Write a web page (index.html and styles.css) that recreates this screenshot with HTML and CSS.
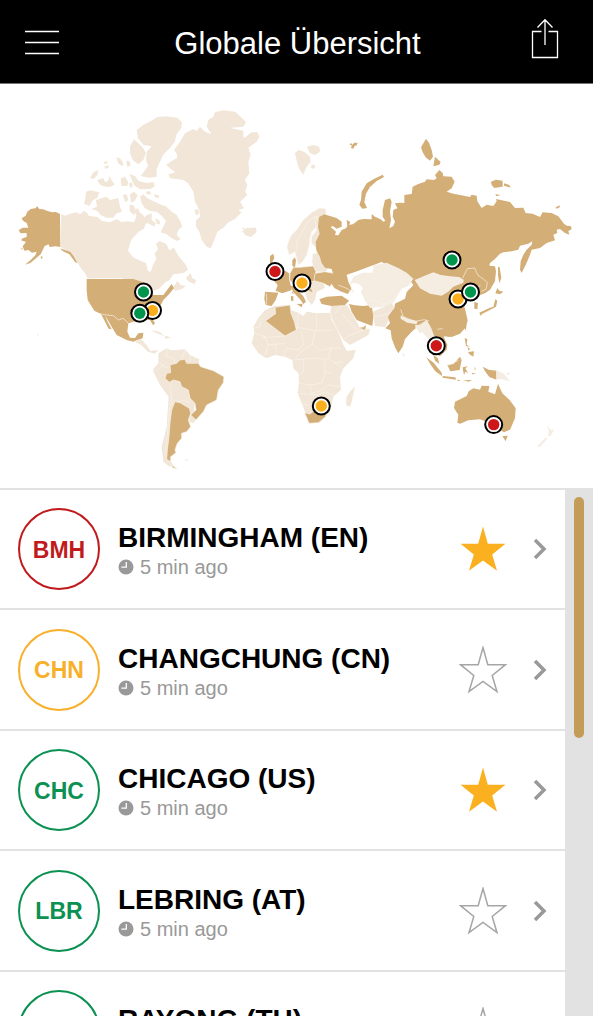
FILE: index.html
```html
<!DOCTYPE html>
<html lang="de">
<head>
<meta charset="utf-8">
<meta name="viewport" content="width=device-width, initial-scale=1">
<title>Globale Übersicht</title>
<link rel="stylesheet" href="styles.css">
</head>
<body>
<svg class="symbols" aria-hidden="true">
  <symbol id="clock" viewBox="0 0 16 16"><circle cx="8" cy="8" r="7.5" fill="#999"/><path d="M8.3 3v5.2H3.4" fill="none" stroke="#fff" stroke-width="1.3"/></symbol>
  <symbol id="star" viewBox="0 0 48 48"><path d="M24 1.500L28.800 18.700H46.500L33.200 29.500L38 45.700L24 35.500L10 45.700L14.800 29.500L1.500 18.700H19.200z"/></symbol>
  <symbol id="chevron" viewBox="0 0 14 22"><path d="M2 2l9 9-9 9" fill="none" stroke="#999" stroke-width="3.500"/></symbol>
</svg>

<header class="topbar">
  <button class="icon-button" type="button" aria-label="Menü">
    <svg width="34" height="42" viewBox="0 0 34 42"><path d="M0 12.500h34M0 23.500h34M0 34.500h34" stroke="#fff" stroke-width="1.700"/></svg>
  </button>
  <h1 class="topbar-title">Globale Übersicht</h1>
  <button class="icon-button" type="button" aria-label="Teilen">
    <svg width="28" height="42" viewBox="0 0 28 42" fill="none" stroke="#fff" stroke-width="1.300"><path d="M10.500 12.500H1.500v26h25v-26h-9M14 26V1M6.500 8.500L14 .700l7.500 7.800"/></svg>
  </button>
</header>

<section class="map" aria-label="Weltkarte">
<svg class="map-drawing" viewBox="0 84 593 404">
  <!-- Canada and Alaska -->
  <g transform="translate(10 95) scale(.33333)">
    <g class="land-pale">
      <path d="M154 357l12 5 14-6 20-4 10 6 12-10 8 4 6 10 26 4 14 12 24 4 20-10 14 9 18-2 20 3 8-20-8-14 12-9 4 12 12 10 10 18-8 22-16 9-22 24-10 32 14 20 20 10 20 8 6 24 8 2 8-22 9-16-5-16 10-14-6-16 10-8 20 8 10 20 14-8 14 26 22 26 6 14-14 10-30 4-12 18-12 6-20 20-30 10-26 2-14-30-40-14H232l-4-12-14-16-24-42-38-24z"/>
      <path d="M488 578l14-20 10 12 16 3-14 10-18 4zM528 550l14-16 4 14 12 8-4 12-20-10z"/>
      <path d="M380 105l20-15 28-15 14-9 28-2 32 4 14 14-2 16-14 20-6 22-15 20-20 20-9 20-10 22v23l-22 3-26-5 14-18 8-13-6-17 2-25 15-16-24-4-17-20z"/>
      <path d="M360 155l12-22 13 12 14 14 9 16-8 20-15 13-17-13-8-20zM358 237l17 6 10 15 25 6 22-2 2 13-14 7-30 1-18-13z"/>
      <path d="M240 248l12-18 13-4-3 14-12 12zM282 202l10-5v8l-9 2zM283 215l12-5 1 8-10 4zM318 187l12 3 10 15-2 9-13-9zM348 197l10 1 4 14-10 3zM262 255l18-6 5 13 10-5 2-14 8 12 9 14-14 7-20-2-12-6zM332 250l13-5 10 17-3 11-18-1zM357 265l9-3 2 13-8 3zM228 290l12-4 28 6-6 16-14 8-10 17-16-7 4-16zM258 315l17-5 15-5 10 10 25-6 5 26 6 15-18 6-8 12h-20l-18-8-10-12-18-6 17-7zM338 300l12-2 5 17-9 7zM360 298l12-8 11 10-8 18-13 4zM358 330l12 1 8 15-6 14-12-10zM408 290l12-1 4 9h-14zM432 297l16 5-3 8-11-4z"/>
      <path d="M390 305l10-7 12 12 18 8 20 10 20 7 15 15 15 10 12 20 4 15-11 10-5 15 12 12-12 6-15-8-15-12-18-6 8-17 8-17-13-16-15-12-20-2-15-8-10-15zM400 372l10-12 15-5v20l12 10-5 10-17-10-13 1zM436 370l12 6 3 13-12-4z"/>
    </g>
    <g class="land">
      <path d="M150 357l-12-6-12 1-16-5-10-4-12-1-6-8-6 6-14 2-10 8-5 12-12 8 5 8 10 6 5 14-17 0-12 8 6 9 18-1v12l-12 4-5 6 15 5-10 13 5 13 12-2 11 8 14-3-4 11-15 15-16 13 16-5 17-14 14-12 12-25 12-5 3 8 17-2 15 2z"/>
      <path d="M150 460l15 5 16 6 10 12 12 22-7-3-18-24-20-10zM92 484l7 2-6 7zM32 460h5v5z"/>
    </g>
  </g>

  <!-- Greenland, Iceland, Svalbard, Nordic countries -->
  <g transform="translate(160 95) scale(.33333)" class="land-pale">
    <path d="M18 210l17-12 17-10-2-13-8-10 18-25 15-25 25-13 10 6 10-13 15 15 20 8-15-23 5-20 15-10 5-13 25-6 35 4 20 18 13 14-8 13-40 3 15 4 25 5v13l2 10 23-18h17l6 13-8 15-25 18 7 22-7 20 3 35-13 20 7 15-7 20 7 10-22 20 12 20-17 5 10 7-20 20-20 10-15 16-18 12-7 20-13 30-12-5-15-20-7-25-10-15v-20l12-10-2-20-13-25-5-30-15-25-15-10-40-5-5-12 20-6z"/>
    <path d="M103 345l12-2 2 14-9 4zM247 402l4-6 4 8 4-6 8 2 5-2h16l2 14-18 14-17-6-2-6-8-4 8-4zM405 175l10-10 17 5 18 15 2 15-12 15-10 24-12-17-6-17zM440 155l20-5 18 5 2 15-15 10-15-5zM455 208l12 4-5 10-9-4z"/>
    <path class="border" d="M381 458l5-20 9-18 15-15 20-30 25-22 25-14 17 3 1 12-9 22-22 22-12 12-5 20-2 20-8 30-12 20-13 10-5-20-5-20-17 10zM464 370l24-6 4 20v26l8 25-10 20-20 5-15-15v-20l15-20zM458 478l22-8 8 15 13 15 4 20-10 12-25-2-10-15-4-15z"/>
    <path class="border-line" d="M408 470l4-35 18-30 15-28 20-12 17 4"/>
  </g>

  <!-- Africa and the Middle East -->
  <g transform="translate(235 230) scale(.33333)">
    <g class="land-pale">
      <path d="M90 240l28-12 47-3 3 15 22 8 15 10 10-13 30 5 40-2 5 22 20 35 15 40 10 17 27-2-7 25-30 30-10 25 3 40-23 20-10 45-15 15-15 18-33 2-10-30-12-30-12-30 4-35-2-25-15-15-3-25-22-10-30-5-25 10-25-15-20-30 8-30-3-20 15-25z"/>
      <path d="M360 470l-10 45-5 15-12-5 2-25 10-15zM288 228l47-4 10 16 20 35 10 20 30 2-5 18-55 30-20-15-30-55-9-25zM413 245l57-25 12 20-17 25-15 26-30-3zM503 368l5 6-4 6z"/>
      <path d="M213 158l27-6 25 8 5 15-25 10-5 25-10 15-15-20-5-25z"/>
    </g>
    <path class="border-line" d="M185 300l5-50M245 250v52h48M245 302l-60-10M150 318l-70 5M80 265l-5 25-20 5M200 305l5 35-15 20-35-5-10 25M240 302l-8 40-30 20-20 20M232 342l22 20 35-8 30 0M289 354l-10 32 20 12 26-2M175 390l30-3 45-2 29 3M205 387v38l-15 10M270 390v40l-10 30-35 5-32-5M225 465l5 25 30-10 20-15 35 5M190 490l60 5-5 35M250 495l20-10 30 12M100 345l-10 30M120 340l5 32M290 430l-20-5M299 398l20 15M60 310l30 10 10 25 50-5M320 225l-20 25M320 250l25 30 25 20M325 330l20-15 55-20M415 260l35-5 25-15M193 520l30 5"/>
    <g class="land">
      <path class="border" d="M120 232l45-7 3 25 10 25 6 25-34 18-30-23-29-22 31-22zM209 548l16 4 15-12 35-8-3 28-22 18-28 2z"/>
      <path d="M253 208l22-8 45-3 22 15-12 13-40 3-30-6zM342 222l18 4 25 2 25-3 5 35-3 28-22-8-25-10-15-25zM373 293l12-1 8-7-3 14z"/>
      <path d="M105 78l10-7 3 14-6 10 18 15 5 18-10 10-20-2 8-20-8-18zM115 150l15-3 20-25 12 8 1 20 4 16 3 14-28 10-20-8 6-17zM90 185l40 3-8 22-12 18-18-3-4-18z"/>
      <path class="border" d="M165 130l10-18h20l40-4 8 17-3 27-25 8-10 8-25-3-16-15z"/>
      <path d="M172 90l8-8 3 10-3 20-8-4zM165 168l16-2 10 18 14 15 8 16-8 7-10-14-17-18zM185 222l18-1-3 11zM168 198l7 1v14l-7-1zM170 187l5-4v10z"/>
      <path class="border" d="M240 130l30-5 25 5 25 15-5 15-25 2-5 8-20-10-28-8zM210 168l20 8 5 14-15-8z"/>
    </g>
    <path class="border-line" d="M95 190v34"/>
    <path d="M267 175l14-6 6 7 12-3-6-6 16-4 8 12 20 13-17 8-30-4-35 7z" fill="#fff"/>
  </g>

  <!-- Russia and China -->
  <g transform="translate(310 120) scale(.33333)">
    <path class="land" d="M43 283l17 5 20 6 15 11v15l-15 6-12-8-6 3 16 14-3 10 10 1 10-16 13-5 4-7-2-18 10 5-2 10 12-3 15-12 15-3 25 1v-16l10 8 17 8 8 7 6-3-8-12v-20l7-30 15-5 5 10-5 30 3 25-5 25 12-7 5-13-7-15 2-20 12-5-7-15 17-2 11 1v-24l22-3 3-22 17-8 20-7 5-7 22 2 8-5-5-10 13-15 10 9 2 10 25 1 9 15-9 20-15 10 20 6 20 4 30 6 5-7 15 3 2 17 13 20 15-10 20 4 10-14-2-7 42 9 15 18 25-1 7 16 21 2 22 10 8-14 27 2 20 10 17 22 8 6 12 1 3 9-10 7 3 10-13-5-15-12-10 2 2 10-12 5 5 17-25 8-20 15-25 5-5 15-8 20-7 15-10 20-5-10 2-25 8-20 10-15 15-15 2-10-12 7-25 6-5 12-20 5-25 3-10 4-15 16-15 12-2 8 17 2 3 15-3 30-15 25-14 10-30 12-15 8-20 12 5 20 7 30-5 20-18 20-25 10-25-2-15-8-25 5v-30l-20-2-30 7-35-17-5-18-20-2 5-33 30-15 5-20 20-20-15-25-80-45-80 30-25 8 5 22 10 20-12 16-22-8-18-10-10-15 8-22-6-20-20-4-10-14-6-20-10-18-2-25 12-25-5-20 3-30z"/>
    <path class="land" d="M148 255l5-15 2-25 15-25 20-12 28-14 4 7-22 12-20 18-12 20-5 25 8 18-14 2zM118 72l6-2 3 4 6-6 10 0-3 8-6 2-4 8-8-2 4-6zM333 82l15-26 9 12 8 22 4 20-9 12-13-10-9-15zM375 110l17 16-4 8-18 5zM543 185l15-6 20 3v18l-25 4-8-9zM582 190l16 5 4 8-20-6zM556 222l15 4-12 3zM736 263l12-7 2 5-9 5zM782 353l8 3z"/>
    <path class="land-faint" d="M130 470l28-12 30 0 2-22 40-8 35 16 25 14 20 18-15 22-20 8-17 28-8 15-22 10-48 5-20-30-35-20-5-22z"/>
    <path class="land-faint" d="M314 480l30-13 26-10 22 8 28 4 27 2 14 8-1 9-30 12-15 15-20 12-35-6-30-16z"/>
    <path class="border-line" d="M458 474l14-28 22-2 10 22 20 14 8 8-4 20-14 6M180 540l25 5 15 10 20-12 16-2M195 560l30 5M500 505l12-10"/>
    <path d="M130 488l18 4 10 12-6 12 10 18-6 20-18-8 2-18-14-22-4-12z" fill="#fff"/>
    <path class="border-line" d="M85 495l30 12 15 18"/>
  </g>

  <!-- South and East Asia, Australia -->
  <g transform="translate(380 260) scale(.33333)">
    <path class="land" d="M40 148l20 4 10 23 35 15 2 15-12 10-20 22-7 23-13 20-10-18-10-27-3-24-16-6 14-15-6-20zM155 208l33 2 4 22 10 22-2 15-20 20-22-14-15-8 8-35z"/>
    <path class="land-faint" d="M62 166l20 10 30 8-2 9-28-5-20-12zM104 196l14-2 22-14 14 25 10 26-14 10-14-14-10-12-6 6zM66 280l8 3-2 8z"/>
    <path class="land" d="M160 285l14 10 4 17-13-10zM139 292l22 16 24 30 1 10-20-14-14-20zM188 348l38 4 2 7-40-6zM202 315l18-3 20-22 5 10-6 30-28 4zM248 322l16-3-8 6 8 14-8-4-4 10-3-14zM232 359l10 1-8 4zM250 361l26-1-10 5zM284 319l3 9-3 3zM308 320l18 9 24 3v27l-22-8-12-16zM275 338l14 3-12 2zM254 234l8 4-2 16 10 6-12-2zM264 276l18-2-2 16-10-6zM262 262l8 4-4 6zM254 200l6-2-4 15zM200 225l9-2-4 9zM283 125l11 5-2 18-9-2zM298 158l30-14 12-4 6-22 6 4-4 18-14 8-28 14-4 6zM346 100l6-16 6 8 12 3-10 8zM354 20l5 2 5 32-6 16-4-24z"/>
    <path class="land" d="M225 425l35-17 6-14 14-9 20 4 5-12 23 1-3 17 20 8 9-32 13 29 22 20 18 25-2 30-15 34-18 8-22-12-16-18-14-2-20-7-35 3-25 10-8-3 3-24-13-20zM367 528l16-1-6 17z"/>
    <path class="land-faint" d="M350 331l22 10 18 23-24-6h-16zM500 495l12 15 10-1-10 20-8-2 2-14zM470 560l28-28 4 4-22 24zM458 415l10 7zM376 340l16-3-8 8zM520 403l8-4zM15 580l7 3z"/>
    <path class="border-line" d="M350 330v30M62 148l8 22 35 14 28-5 14 4M172 208l16-2M205 316l30-15"/>
  </g>

  <!-- The Americas -->
  <g transform="translate(70 270) scale(.33333)">
    <path class="land" d="M50 27h140l25 8 25 15 10 25 30 0 25-33 7 13-17 20-15 15-18 35-14 23 7 12-6 6-9-16-25 0-25 5-15 5-3 25 8 18 15 1 10-14 15-2-2 17-18 6-10 4-20-5-30-15-15-25-20-35 8 20 12 23-9-2-23-44-20-10-20-32-3-30z"/>
    <path class="border-line" d="M85 131l25 4 20 2 15 13 15-5 15 15"/>
    <path class="land-pale" d="M195 215l18-8 18 20 10 16 25-3-12 11-20-6-20-20zM242 180l28 6 14 12-24-8zM285 197l18 5-18 4zM342 569l13-1-5 4zM265 250l25-15 12 6 43-3 15 17 28 13-3 17-55 15 10 45 20 20-2 20 17 15-3 15 8 30-10 15-12-5v-25l-38-30-10 70-10 50-10 40 20 25-12 5-18-15-5-45 15-60 6-90-26-35-22-45 17-20z"/>
    <path class="border-line" d="M292 236l-4 22 25 10 2 15M345 240l-10 28M268 280l24 14M250 302l14-4 18-14M302 345l4 60M362 255v22M318 398l22-8 20 10M300 400l-8 90-6 60"/>
    <path class="land border" d="M330 270l15-2 5 12 35 0 7 10 38 12 32 18-2 18-15 22-5 30-30 15-10 20-22 25-16-15 16-15-3-20-15-15-5-25-20-10-5-15-20-5-12 7-13-12 5-15 12-2-2-23 20-5zM315 395l15 3 28 17 4 15-7 20 7 20-12 15-15 5v15l-13 15-7 20 3 8-16 12v15l-12-7 2-28 5-40 3-40 5-40zM303 583l19 14-14-4z"/>
  </g>
  <path class="land-pale" d="M37 334l2 1-1 1z"/>

  <g class="pins">
    <g class="pin pin-green" transform="translate(452 260)"><circle class="pin-ring" r="8.500"/><circle class="pin-dot" r="5.700"/></g>
    <g class="pin pin-amber" transform="translate(458 299)"><circle class="pin-ring" r="8.500"/><circle class="pin-dot" r="5.700"/></g>
    <g class="pin pin-green" transform="translate(470.500 292)"><circle class="pin-ring" r="8.500"/><circle class="pin-dot" r="5.700"/></g>
    <g class="pin pin-red" transform="translate(275 271.500)"><circle class="pin-ring" r="8.500"/><circle class="pin-dot" r="5.700"/></g>
    <g class="pin pin-amber" transform="translate(302 283)"><circle class="pin-ring" r="8.500"/><circle class="pin-dot" r="5.700"/></g>
    <g class="pin pin-amber" transform="translate(321.300 406)"><circle class="pin-ring" r="8.500"/><circle class="pin-dot" r="5.700"/></g>
    <g class="pin pin-green" transform="translate(143.500 292)"><circle class="pin-ring" r="8.500"/><circle class="pin-dot" r="5.700"/></g>
    <g class="pin pin-amber" transform="translate(152.500 310.500)"><circle class="pin-ring" r="8.500"/><circle class="pin-dot" r="5.700"/></g>
    <g class="pin pin-green" transform="translate(139.800 313.300)"><circle class="pin-ring" r="8.500"/><circle class="pin-dot" r="5.700"/></g>
    <g class="pin pin-red" transform="translate(436.300 345.700)"><circle class="pin-ring" r="8.500"/><circle class="pin-dot" r="5.700"/></g>
    <g class="pin pin-red" transform="translate(493.700 424.600)"><circle class="pin-ring" r="8.500"/><circle class="pin-dot" r="5.700"/></g>
  </g>
</svg>
</section>

<main class="locations">
  <ul class="list">
    <li class="row">
      <span class="badge badge-red">BMH</span>
      <div class="info"><h2 class="name">BIRMINGHAM (EN)</h2><p class="time"><svg class="clock"><use href="#clock"/></svg>5 min ago</p></div>
      <button class="favorite favorite-on" type="button" aria-label="Favorit Birmingham" aria-pressed="true"><svg class="star"><use href="#star"/></svg></button>
      <a class="open" href="#bmh" aria-label="Birmingham öffnen"><svg class="chevron"><use href="#chevron"/></svg></a>
    </li>
    <li class="row">
      <span class="badge badge-amber">CHN</span>
      <div class="info"><h2 class="name">CHANGCHUNG (CN)</h2><p class="time"><svg class="clock"><use href="#clock"/></svg>5 min ago</p></div>
      <button class="favorite" type="button" aria-label="Favorit Changchung" aria-pressed="false"><svg class="star"><use href="#star"/></svg></button>
      <a class="open" href="#chn" aria-label="Changchung öffnen"><svg class="chevron"><use href="#chevron"/></svg></a>
    </li>
    <li class="row">
      <span class="badge badge-green">CHC</span>
      <div class="info"><h2 class="name">CHICAGO (US)</h2><p class="time"><svg class="clock"><use href="#clock"/></svg>5 min ago</p></div>
      <button class="favorite favorite-on" type="button" aria-label="Favorit Chicago" aria-pressed="true"><svg class="star"><use href="#star"/></svg></button>
      <a class="open" href="#chc" aria-label="Chicago öffnen"><svg class="chevron"><use href="#chevron"/></svg></a>
    </li>
    <li class="row">
      <span class="badge badge-green">LBR</span>
      <div class="info"><h2 class="name">LEBRING (AT)</h2><p class="time"><svg class="clock"><use href="#clock"/></svg>5 min ago</p></div>
      <button class="favorite" type="button" aria-label="Favorit Lebring" aria-pressed="false"><svg class="star"><use href="#star"/></svg></button>
      <a class="open" href="#lbr" aria-label="Lebring öffnen"><svg class="chevron"><use href="#chevron"/></svg></a>
    </li>
    <li class="row">
      <span class="badge badge-green"></span>
      <div class="info"><h2 class="name">RAYONG (TH)</h2></div>
      <button class="favorite" type="button" aria-label="Favorit Rayong" aria-pressed="false"><svg class="star"><use href="#star"/></svg></button>
      <a class="open" href="#ryg" aria-label="Rayong öffnen"><svg class="chevron"><use href="#chevron"/></svg></a>
    </li>
  </ul>
  <div class="scroll-track"><div class="scroll-thumb"></div></div>
</main>
</body>
</html>
```

FILE: styles.css
```css
* { box-sizing: border-box; }

body {
  margin: 0;
  height: 100vh;
  display: flex;
  flex-direction: column;
  overflow: hidden;
  background: #fff;
  color: #000;
  font-family: "Liberation Sans", Arial, sans-serif;
}

h1, h2, p, ul { margin: 0; padding: 0; }

button { border: 0; padding: 0; background: none; cursor: pointer; }

svg { display: block; }

.symbols { display: none; }

.topbar {
  flex: none;
  height: 84px;
  padding: 0 32px 4px 24px;
  display: grid;
  grid-template-columns: 36px 1fr 32px;
  align-items: center;
  background: #000;
  border-bottom: 1px solid #777;
  color: #fff;
}

.icon-button { display: flex; justify-content: center; }

.topbar-title {
  padding: 8px 0 0 6px;
  text-align: center;
  font-size: 31px;
  line-height: 36px;
  font-weight: 400;
}

.map { flex: none; }
.map-drawing { width: 100%; height: auto; }

.land { fill: #d3ae76; }
.land-pale { fill: #f1e6d7; }
.land-faint { fill: #f5ede2; }
.border { stroke: #faf4eb; stroke-width: 2; }
.border-line { fill: none; stroke: #faf4eb; stroke-width: 2; }

.pin-ring { fill: #fff; stroke: #000; stroke-width: 2px; }
.pin-green .pin-dot { fill: #00954d; }
.pin-amber .pin-dot { fill: #faaf1e; }
.pin-red .pin-dot { fill: #cd1719; }

.locations {
  flex: 1;
  min-height: 0;
  display: flex;
  overflow: hidden;
  border-top: 2px solid #e2e2e2;
}

.list { flex: 1; list-style: none; }

.row {
  height: 120px;
  padding: 0 18px;
  display: flex;
  align-items: center;
  border-bottom: 2px solid #e2e2e2;
}

.row:nth-child(even) { height: 121px; }

.badge {
  flex: none;
  width: 82px;
  height: 82px;
  margin-right: 18px;
  padding-top: 2px;
  display: flex;
  align-items: center;
  justify-content: center;
  border: 2px solid;
  border-radius: 50%;
  font-size: 23px;
  font-weight: 700;
}

.badge-red { color: #c01a1c; }
.badge-amber { color: #f8af2a; }
.badge-green { color: #0b9152; }

.info { flex: 1; height: 64px; padding-top: 4px; }

.name { font-size: 28px; line-height: 34px; font-weight: 700; }

.time {
  display: flex;
  align-items: center;
  gap: 6px;
  color: #999;
  font-size: 20px;
  line-height: 24px;
}

.clock { width: 16px; height: 16px; }

.favorite { margin-right: 26px; }

.star {
  width: 48px;
  height: 48px;
  fill: none;
  stroke: #a6a6a6;
  stroke-width: 1.5px;
}

.favorite-on .star { fill: #fbb020; stroke: none; }

.chevron { width: 14px; height: 22px; }

.scroll-track {
  flex: none;
  width: 28px;
  padding: 7px 9px;
  background: #e2e2e2;
}

.scroll-thumb { height: 241px; border-radius: 5px; background: #c39d58; }
```
